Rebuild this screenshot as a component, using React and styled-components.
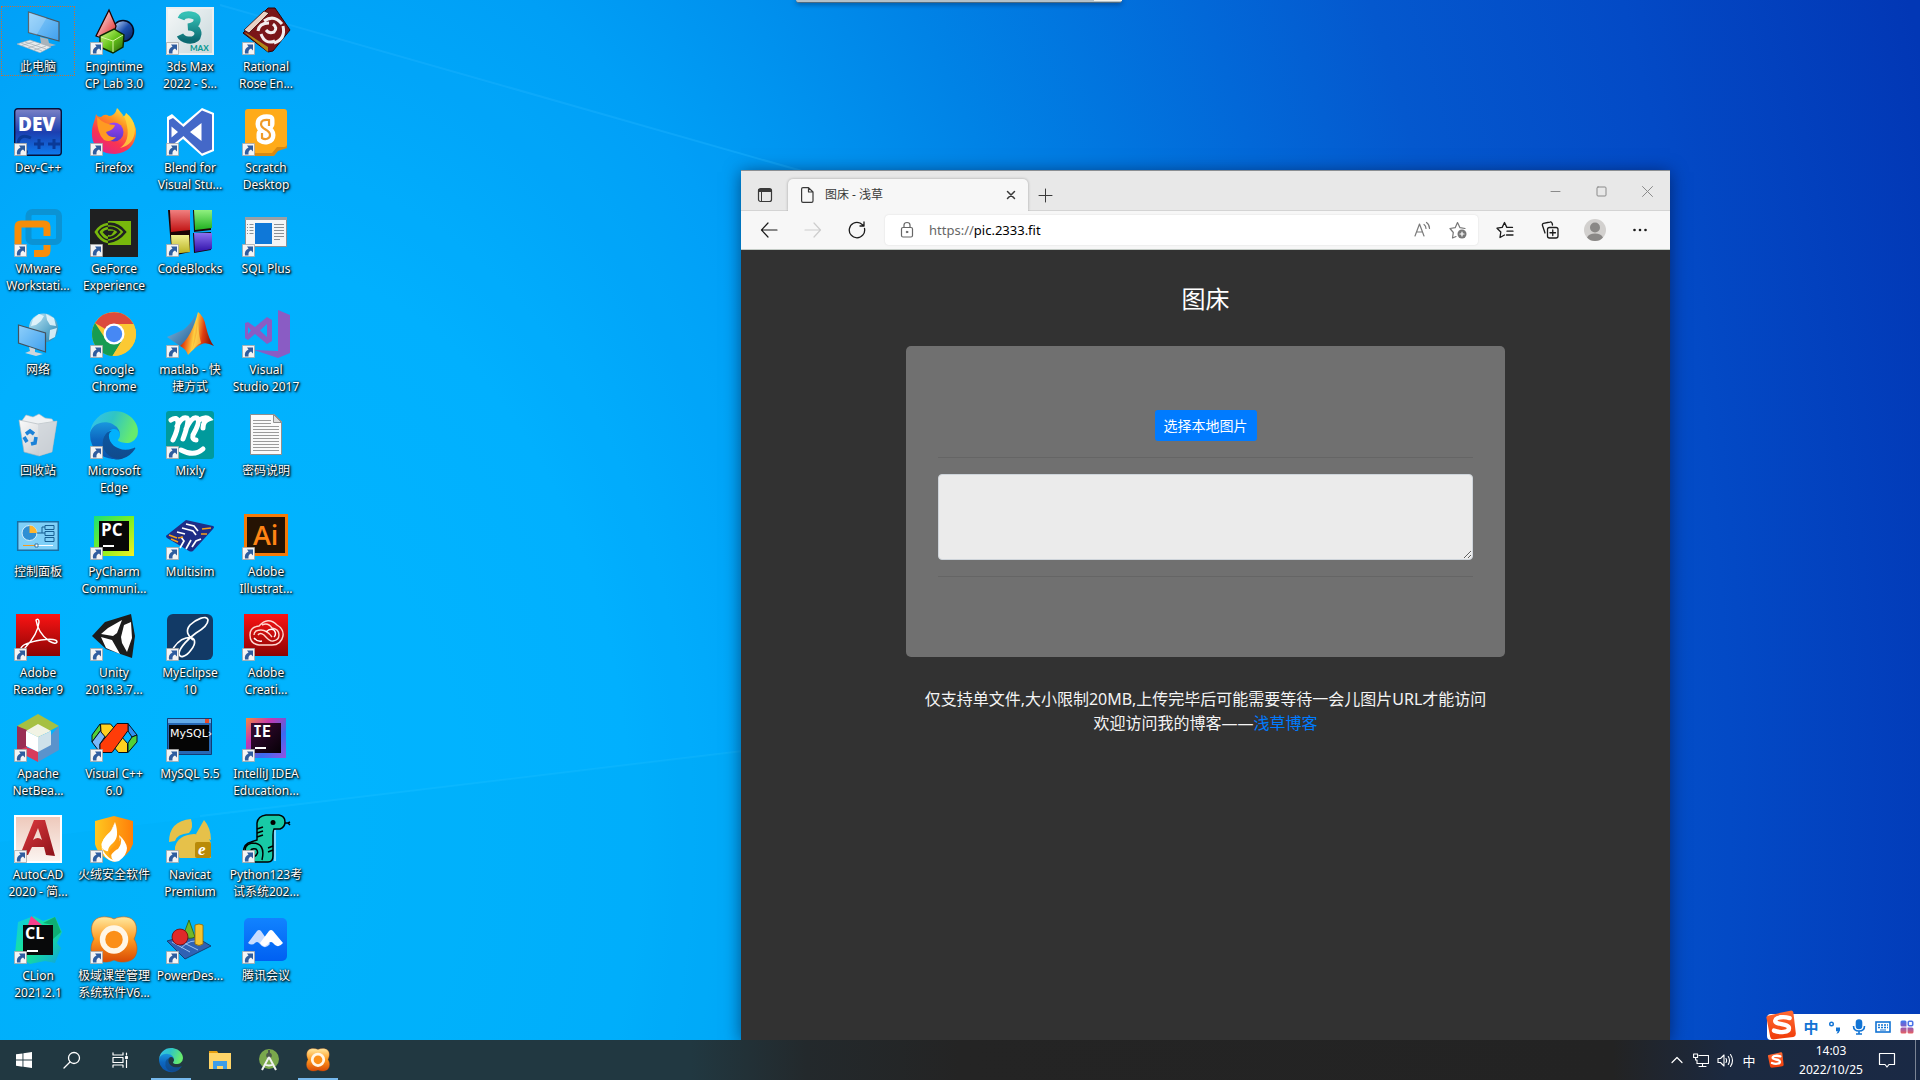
import React from "react";
import styled, { createGlobalStyle, css } from "styled-components";

const uiFont = `"Noto Sans", "Noto Sans CJK SC", sans-serif`;

const GlobalStyle = createGlobalStyle`
  *, *::before, *::after { box-sizing: border-box; }
  body { margin: 0; font-family: ${uiFont}; font-size: 12px; overflow: hidden; }
  button { font-family: inherit; border: 0; padding: 0; background: none; color: inherit; }
`;

/* ---------- shared paint servers ---------- */

const Grad = ({ id, stops, x1 = 0, y1 = 0, x2 = 0, y2 = 1 }) => (
  <linearGradient id={id} x1={x1} y1={y1} x2={x2} y2={y2}>
    {stops.map((c, i) => (
      <stop key={i} offset={i / (stops.length - 1)} stopColor={c} />
    ))}
  </linearGradient>
);

const HiddenSvg = styled.svg`
  position: absolute;
  width: 0;
  height: 0;
`;

const PaintDefs = () => (
  <HiddenSvg aria-hidden="true">
    <defs>
      <Grad id="screen" stops={["#8fd0fb", "#3fa0ee"]} x2={1} />
      <Grad id="engRed" stops={["#fff", "#e02020"]} x2={1} />
      <Grad id="engBlue" stops={["#d5e8ff", "#1c4fae", "#061c52"]} x2={1} />
      <Grad id="engGreen" stops={["#dcff90", "#67c51c", "#245c08"]} x2={1} />
      <Grad id="max3" stops={["#35c0b5", "#0b6a72"]} />
      <Grad id="maxBg" stops={["#f4f7f7", "#c8d8dc"]} x2={1} />
      <Grad id="dev" stops={["#7d83c6", "#1c3fb0", "#0d7cf0"]} />
      <Grad id="fox" stops={["#fff04a", "#ff9020", "#fa3550", "#e0208c"]} x1={0.8} x2={0.2} />
      <Grad id="foxIn" stops={["#9a45f5", "#5a36c8"]} />
      <Grad id="cbR" stops={["#f08080", "#c01010"]} />
      <Grad id="cbG" stops={["#90f080", "#20b020"]} />
      <Grad id="cbY" stops={["#f2f090", "#b8b020"]} />
      <Grad id="cbB" stops={["#8a70f0", "#3010a8"]} />
      <Grad id="globe" stops={["#c4ecfa", "#1d7fae"]} x2={1} />
      <Grad id="mat" stops={["#7a1505", "#e84a10", "#ffd040", "#e03c10", "#901808"]} x2={1} y2={0.2} />
      <Grad id="matBlue" stops={["#8fc4e8", "#1e5c94"]} x2={1} />
      <Grad id="bin" stops={["#fbfbfb", "#b8bec4"]} x2={1} />
      <Grad id="edgeA" stops={["#0c59a4", "#114a8b"]} />
      <Grad id="edgeB" stops={["#1b9de2", "#0d67c0", "#0a54ac"]} />
      <Grad id="edgeC" stops={["#35c1f1", "#2fc5c5", "#66eb6e"]} x2={1} y2={0.3} />
      <Grad id="py" stops={["#18e07a", "#7cf020", "#f8f020"]} x2={1} />
      <Grad id="red" stops={["#fb1414", "#8c0404"]} />
      <Grad id="ie" stops={["#f88a3a", "#c438b0", "#3a6cf0", "#9a50e0"]} x2={1} />
      <Grad id="ieIn" stops={["#3a0a38", "#060006"]} x2={1} />
      <Grad id="acad" stops={["#e03a40", "#8c1218"]} x2={1} />
      <Grad id="acadBg" stops={["#fbf4f0", "#eec9bb"]} y1={1} y2={0} />
      <Grad id="fire" stops={["#ffc820", "#ff7e08"]} x2={1} y2={0} />
      <Grad id="flower" stops={["#ffe9a0", "#ff9a20", "#d84a04"]} />
      <Grad id="meet" stops={["#1183ff", "#0060f2"]} />
      <Grad id="clion" stops={["#10c8e8", "#18e890", "#10a0e0"]} x2={1} />
      <Grad id="sogou" stops={["#ff6a34", "#f03c08"]} />
      <Grad id="sogouGrid" stops={["#3f78f0", "#8a5ac0", "#e86060"]} />
    </defs>
  </HiddenSvg>
);

/* ---------- application artwork, drawn on a 48-unit square ---------- */

const EdgeArt = () => (
  <g transform="scale(.1875)">
    <path fill="url(#edgeA)" d="M235.7 195.5a93.7 93.7 0 0 1-10.6 4.7 101.9 101.9 0 0 1-35.9 6.4c-47.3 0-88.5-32.5-88.5-74.3a31.5 31.5 0 0 1 16.4-27.3c-42.8 1.8-53.8 46.4-53.8 72.5 0 74 68.1 81.4 82.8 81.4 7.9 0 19.8-2.3 27-4.6l1.3-.4a128.3 128.3 0 0 0 66.6-52.8 4 4 0 0 0-5.3-5.6Z" />
    <path fill="url(#edgeB)" d="M105.7 241.4a79.2 79.2 0 0 1-22.7-21.3 80.7 80.7 0 0 1 29.5-120c3.1-1.5 8.5-4.1 15.6-4a32.4 32.4 0 0 1 25.7 13 31.9 31.9 0 0 1 6.3 18.7c0-.2 24.5-79.6-80-79.6-43.9 0-80 41.6-80 78.2a130.2 130.2 0 0 0 12.1 56 128 128 0 0 0 156.4 67 75.5 75.5 0 0 1-62.8-8Z" />
    <path fill="url(#edgeC)" d="M152.3 148.9c-.9 1-3.4 2.5-3.4 5.7 0 2.6 1.7 5.2 4.8 7.3 14.3 10 41.4 8.6 41.5 8.6 10.7 0 21.1-2.9 30.3-8.3a61.4 61.4 0 0 0 30.4-52.9c.3-22.4-8-37.3-11.3-43.9C223.5 23.9 177.7 0 128 0A128 128 0 0 0 0 126.2c.5-36.5 36.8-66 80-66 3.5 0 23.5.3 42 10a72.6 72.6 0 0 1 30.9 29.3c6.1 10.6 7.2 24.1 7.2 29.5s-2.7 13.3-7.8 19.9Z" />
  </g>
);

const FlowerArt = () => (
  <>
    <path fill="url(#flower)" stroke="#c85a10" strokeWidth=".6" d="M24 3C30 0 39 0 43 4c5 5 4 13 1 19 4 6 4 14 0 19-5 5-14 5-20 2-6 3-15 3-20-2-4-5-4-13 0-19C1 17 0 9 5 4c4-4 13-4 19-1Z" />
    <circle cx="24" cy="23.5" r="11.500" fill="#fb8f18" stroke="#fff6e6" strokeWidth="5.500" />
  </>
);

const SogouArt = () => (
  <>
    <path fill="url(#sogou)" d="M2 9 38 1q4-1 5 3l4 34q0 4-4 5L11 47q-4 0-5-4L0 13q-1-3 2-4Z" />
    <path fill="none" stroke="#fff" strokeWidth="7" strokeLinecap="round" d="M37 13c-9-3-22-2-23 4-1 7 22 4 22 12 0 7-14 8-24 4" />
  </>
);

const art = {
  pc: (
    <>
      <path fill="url(#screen)" stroke="#4b5660" strokeWidth="1.200" d="M14.500 5 45 15v19L14.500 25.500Z" />
      <path fill="#fff" opacity=".2" d="m14.500 5 18 6-10 17-8-2.500Z" />
      <path fill="#a9b4bc" d="m26 30 8 2 1 4 7 2-8 2-13-3 6-1Z" />
      <path fill="#e6eaed" stroke="#a4adb4" strokeWidth=".6" d="m3 37 13-4 21 7-11 5.700Z" />
      <path stroke="#9aa4ab" strokeWidth=".6" d="m7 36 21 8M11 35l21 7M8 38.500l12-4M14 41l12-4M20 43l12-4" />
    </>
  ),
  engin: (
    <>
      <circle cx="33" cy="24" r="10.500" fill="url(#engBlue)" stroke="#020a20" strokeWidth="1.500" />
      <path fill="url(#engRed)" stroke="#200" strokeWidth="1.300" d="M19 3 6 29q8 4 17 0l3-10Z" />
      <path fill="url(#engGreen)" stroke="#0c2a02" strokeWidth="1.400" d="m10 29 14-7 10 6-1 12-10 6-13-6Z" />
      <path fill="none" stroke="#d8f6a0" d="m11 30 12 4 10-6M23 34v11" />
    </>
  ),
  max: (
    <>
      <path fill="#e9eff0" d="M0 0h48v48H0z" />
      <path fill="url(#maxBg)" d="M2 2h44v44H2z" />
      <path fill="none" stroke="url(#max3)" strokeWidth="7" d="M15 12q2-5 10-4 7 1 6 6-1 5-9 6 10 0 10 7-1 7-10 6-6-1-8-5" />
      <text x="24" y="43.500" fontFamily="Lato" fontWeight="900" fontSize="8" fill="#0f9a95">MAX</text>
    </>
  ),
  rose: (
    <>
      <path fill="#7a1518" stroke="#2a0505" d="M22 5 26 1h7l15 22-17 21-5 1L1 26Z" />
      <path fill="#ead2c4" stroke="#3a0808" strokeWidth=".8" d="M22 4 2 23l5 3L27 6Z" />
      <path fill="#b08818" d="m2 25 4 2 20 13v5Z" />
      <path fill="none" stroke="#f4eded" strokeWidth="3" d="M22 14q10-7 18 3M16 24q1-8 11-8M41 19q3 13-9 17M19 27q4 11 14 7M31 17q5 4 1 8-5 2-8-2" />
    </>
  ),
  dev: (
    <>
      <rect x=".7" y=".7" width="46.600" height="46.600" rx="3" fill="url(#dev)" stroke="#06123a" strokeWidth="1.400" />
      <path stroke="#0a3a98" strokeWidth="3" fill="none" d="M17 30q-11-5-13 5 0 9 10 9M20 36h10M25 31v10M34 36h12M40 31v10" />
      <text x="4" y="22.500" fontFamily="Open Sans" fontWeight="800" fontSize="19" fill="#fff">DEV</text>
    </>
  ),
  firefox: (
    <>
      <path fill="url(#fox)" d="M6 6q1 3 5 3 4-4 8-1 6 0 8-8 5 5 6 9 3-2 3-4 11 10 10 21-2 18-21 20C8 46 1 35 2 24 2 17 5 13 6 6Z" />
      <circle cx="24" cy="24" r="9.500" fill="url(#foxIn)" />
      <path fill="#ff9a22" d="M7 9q8 8 18 8-1 5-9 7 2 6 10 5-5 6-12 3-7-6-7-23Z" />
      <path fill="#ffd83c" opacity=".8" d="M27 0q9 8 10 18 3 15-7 22 14-3 15-18Q44 10 36 5q0 3-3 4-2-6-6-9Z" />
    </>
  ),
  blend: (
    <>
      <path fill="#fff" d="M36 0 48 5v38l-12 5-19-17-11 9-5-2V9l5-3 11 10Z" />
      <path fill="#4468c8" d="M36 2.500 46 6.500v35l-10 4L17.500 28 7 36.500 3 35V12l4-2 10.500 9Z" />
      <path fill="#fff" d="m5.500 18.500 6.500 5.500-6.500 5.500ZM35.500 15v18L24 24Z" />
    </>
  ),
  scratch: (
    <>
      <path fill="#d98a12" d="M3 6h42v34l-9 3-4 5H3Z" />
      <path fill="#ffab19" d="M6 1h36q3 0 3 3v32q0 3-3 3h-7l-5 6H6q-3 0-3-3V4q0-3 3-3Z" />
      <path fill="none" stroke="#fff" strokeWidth="11" strokeLinecap="round" strokeLinejoin="round" d="M27 16v-4q-8-1-8 4c0 6 9 5 9 11 0 4-5 5-8 3v-4" />
      <path fill="none" stroke="#f09a28" strokeWidth="2.200" d="M27 18v-6q-8-1-8 4c0 6 9 5 9 11 0 4-5 5-8 3v-5" />
    </>
  ),
  vmware: (
    <>
      <rect x="14.500" y="3" width="30.500" height="30" rx="4" fill="none" stroke="#0b93d4" strokeWidth="6" />
      <path fill="none" stroke="#f78d08" strokeWidth="7" d="M33 27V18q0-3-3-3H7q-3 0-3 3v18M20 44.500h10q3 0 3-3V36" />
    </>
  ),
  geforce: (
    <>
      <path fill="#1f2021" d="M0 0h48v48H0z" />
      <path fill="#78b80c" d="M18 12h23v24H18z" />
      <path fill="none" stroke="#78b80c" strokeWidth="2.600" d="M18 15Q10 16 6 23q5 9 12 10M18 19q-5 1-7 4 3 5 7 6" />
      <path fill="none" stroke="#1f2021" strokeWidth="2.600" d="M18 15q10-1 17 8-7 9-17 10M18 19q7-1 11 4-5 6-11 6M18 23h4q-2 4-5 0" />
    </>
  ),
  codeblocks: (
    <>
      <path fill="#1b0505" d="m2 1 22 1v21l-20 3ZM27 1l18 1v19l-17 2ZM4 26l20-3v20L6 47ZM27 24l18-1v18l-17 3Z" />
      <path fill="url(#cbR)" d="M4 1h20v20L5 23Z" />
      <path fill="url(#cbG)" d="M28 1h18v18l-17 2Z" />
      <path fill="url(#cbY)" d="M5 26h18l1 17L6 45Z" />
      <path fill="url(#cbB)" d="M28 24h18v16l-17 3Z" />
    </>
  ),
  sql: (
    <>
      <path fill="#f4f5f6" stroke="#8b9196" d="M3.500 8.500h41v29h-41z" />
      <path fill="#9aa0a5" d="M3 8h42v3H3z" />
      <path fill="#0f78d8" d="M13 14h17v21H13z" />
      <path stroke="#8a9096" d="M5 15.500h1M7.500 15.500h4M5 18.500h1M7.500 18.500h4M5 21.500h1M7.500 21.500h4M5 24.500h1M7.500 24.500h4M32 15.500h10M32 18.500h10M32 21.500h10M32 24.500h10M32 27.500h10M32 30.500h6" />
    </>
  ),
  network: (
    <>
      <circle cx="29.500" cy="18" r="14.500" fill="url(#globe)" />
      <path fill="#eaf8fd" opacity=".85" d="m19 9 6-5 5 2-3 5-5 4-5 1ZM32 4l8 4 2 8-6-1-3-5ZM36 20l7-2-2 9-6 3Z" />
      <path fill="url(#screen)" stroke="#44525e" strokeWidth="1.200" d="m4.500 15 27 8v19L4.500 33Z" />
      <path fill="#cfd6db" d="m15 37 6 2v3l8 2-7 2-11-3 5-2Z" />
    </>
  ),
  chrome: (
    <>
      <circle cx="24" cy="24" r="22" fill="#fbc933" />
      <path fill="#dc4a3c" d="M24 24 5 13A22 22 0 0 1 43.500 14H24Z" />
      <path fill="#179c52" d="M5 13A22 22 0 0 0 22.500 46L33 29l-9-5-8.500 5Z" />
      <path fill="#fbc933" d="M43.500 14A22 22 0 0 1 22.500 46L33 29q3-7-3-15Z" />
      <circle cx="24" cy="24" r="10.500" fill="#fff" />
      <circle cx="24" cy="24" r="8.200" fill="#4688f4" />
    </>
  ),
  matlab: (
    <>
      <path fill="url(#matBlue)" d="m1 27 16-7q8-6 13-16l-5 26-11 6Z" />
      <path fill="url(#mat)" d="M32 2q6 4 8 15 3 13 8 19-8-4-12-2-6 2-14 11-2-6-8-9Q26 26 32 2Z" />
      <path fill="#ffdc50" opacity=".7" d="M32 4q0 19 3 29-5 2-9 8 6-17 6-37Z" />
    </>
  ),
  vs: (
    <>
      <path fill="#8a5cc4" d="m36 0 12 5v38l-12 5-24-8 24 1Z" />
      <path fill="#8a5cc4" fillRule="evenodd" d="m25 7 5 3v21l-5 3-12-10-7 6-3-2V13l3-1 7 5ZM6 17v7l3-3.500Zm19-3-7 6.500 7 6.500Z" />
    </>
  ),
  bin: (
    <>
      <path fill="#eef1f3" stroke="#b4bbc1" strokeWidth=".6" d="m7 11 5-7 7 2 6-3 6 4 7 1 3 5-17 4Z" />
      <path fill="url(#bin)" stroke="#a9b1b7" strokeWidth=".6" d="m5 9 19 4 19-3-5 31-13 4-15-4Z" />
      <path fill="#cdd3d8" d="m24 13 19-3-5 31-13 4Z" opacity=".7" />
      <path fill="none" stroke="#1b82d8" strokeWidth="3.600" d="m12 23 4-3 4 3M22 26l-1 6-4 1M13 31l-3-5" />
    </>
  ),
  edge: <EdgeArt />,
  mixly: (
    <>
      <rect width="48" height="48" rx="3" fill="#009a9c" />
      <path fill="none" stroke="#fff" strokeWidth="5" strokeLinecap="round" d="M5 9q6-4 7 2 0 8-5 18M11 15q5-10 10-8 3 2-4 21M20 18q6-13 11-11 4 3-4 17-1 5 3 5M33 9q7-4 10-1-6 2-6 9M15 39q13 7 22-1" />
    </>
  ),
  doc: (
    <>
      <path fill="#fafafa" stroke="#8f8f8f" d="M8.500 3.500h24l7 7v33h-31z" />
      <path fill="#ddd" stroke="#8f8f8f" d="M31.500 3.500v8h8z" />
      <path stroke="#9b9b9b" d="M11 9.500h18M11 12.500h18M11 15.500h26M11 18.500h26M11 21.500h26M11 24.500h26M11 27.500h26M11 30.500h26M11 33.500h26M11 36.500h26M11 39.500h26" />
    </>
  ),
  panel: (
    <>
      <path fill="#7fd0f8" stroke="#196fa4" strokeWidth="1.500" d="M3.700 9.700h40.600v28.600H3.700z" />
      <circle cx="15.500" cy="21" r="7.500" fill="#2f8fd4" stroke="#d8f0fc" />
      <path fill="#ffb52e" d="M15.500 21v-7.500a7.500 7.500 0 0 1 7.500 7.500Z" />
      <path fill="none" stroke="#175f92" d="M23 21h5v-6h3M28 21h3M31 13.500h9v4h-9zM31 19.500h9v4h-9zM31 25.500h9v4h-9z" />
      <path stroke="#f49a20" d="M9 33.500h13" />
      <path stroke="#fff" d="M24 33.500h15" />
      <path fill="#fff" stroke="#175f92" strokeWidth=".8" d="M21 32h3v3h-3z" />
    </>
  ),
  pycharm: (
    <>
      <path fill="url(#py)" d="M4 4h40v40H4z" />
      <path fill="#070707" d="M9 9h30v30H9z" />
      <text x="11" y="24" fontFamily="Open Sans" fontWeight="700" fontSize="17" fill="#fff">PC</text>
      <path fill="#fff" d="M13 33h11v2H13z" />
    </>
  ),
  multisim: (
    <>
      <path fill="#1e2d86" d="m20 8 27 6q2 1 0 3L27 39q-2 1-4 0L1 26q-2-2 0-3Z" />
      <path fill="none" stroke="#fff" strokeWidth="1.700" d="m20 12 8 2 4 5M16 16l11 3 3 4M11 20l8 2M14 36l4-7-3-4M20 37l5-9M26 35l4-6 5-2" />
      <path fill="none" stroke="#f3a01c" strokeWidth="1.700" d="m3 23 8 3M5 27l7 3M36 17l9-1M35 22l6 0M17 25l-5 1" />
    </>
  ),
  ai: (
    <>
      <path fill="#f47a08" d="M2 2h44v42H2z" />
      <path fill="#251303" d="M5 5h38v36H5z" />
      <text x="11" y="33" fontFamily="Open Sans" fontWeight="600" fontSize="27" fill="#ff8414">Ai</text>
    </>
  ),
  reader: (
    <>
      <path fill="url(#red)" d="M2 1h44v42H2z" />
      <path fill="none" stroke="#fff" strokeWidth="1.500" d="M22 7q3-2 3 2-1 12-14 26-3 3-4 0 2-5 20-8 16-2 16 2-1 3-8-1Q24 20 22 7Z" />
    </>
  ),
  unity: (
    <>
      <path fill="#1c1c1c" d="m2 23 13-14 26-8 4 22-3 22-26-9Z" />
      <path fill="#fff" d="m11 21 7-6 14-8-5 13-4 3ZM11 24l11 3 8 14-14-6ZM34 12l7-3 1 16-5 14-5-9-1-6Z" />
    </>
  ),
  myeclipse: (
    <>
      <rect x="1" y="1" width="46" height="46" rx="6" fill="#123a66" />
      <path fill="none" stroke="#fff" strokeWidth="1.700" d="M4 41q7-14 16-16c11-2 10 6 5 12-5 7-12 9-12 3 1-6 10-15 17-20 7-4 12-8 12-13-1-6-13 0-18 5-5 6-2 11 3 15" />
    </>
  ),
  cloud: (
    <>
      <path fill="url(#red)" d="M2 1h44v42H2z" />
      <path fill="none" stroke="#ffd8d0" strokeWidth="1.400" d="M8 22q0-8 9-9 9-10 18-1 7 4 6 11-2 9-11 9H17q-9-1-9-10ZM12 22q0-5 7-5 6 0 11 7M16 22q2-3 6 0 6 7 9 6 6-1 6-6 0-6-7-7-4-6-10-3" />
      <path fill="none" stroke="#fff" strokeWidth="1.400" d="M20 28q-5 1-8-3M24 19q4-4 8-2 3 4 0 7" />
    </>
  ),
  netbeans: (
    <>
      <path fill="#a6c042" d="m24 0 21 12-21 11L3 12Z" />
      <path fill="#9a2e54" d="M3 12v25l10-2V16Z" />
      <path fill="#d93c5c" d="m3 37 21 11 2-10-14-5Z" />
      <path fill="#5a93cc" d="M45 12v24L24 48V36Z" />
      <path fill="#f1f3e4" d="m24 10 13 7-13 6-12-6Z" />
      <path fill="#fff" d="m12 17 12 6v15l-12-6Z" />
      <path fill="#cfe2ea" d="m37 17-13 6v15l13-7Z" />
    </>
  ),
  vc: (
    <g stroke="#06101c" strokeLinejoin="round">
      <path fill="#52d038" d="m2 21 8-11 1 6-9 12Z" />
      <path fill="#7ab8f8" d="m11 16 5 5-6 9v8.500L2 28Z" />
      <path fill="#ffd020" d="M10.500 10h10l17 19.500v9h-9L11 18Z" />
      <path fill="#3090f0" d="M38 9.500 47 21l-5 2-4-6Z" />
      <path fill="#52d038" d="M47 21v7l-9 10.500V29l4-6Z" />
      <path fill="#ff3c08" d="M27 9.500h11v7L22 38.500H10V30Z" />
    </g>
  ),
  mysql: (
    <>
      <path fill="#2668b4" stroke="#123c74" d="M1.500 4.500h44v36h-44z" />
      <path fill="#62aae8" d="M2 5h43v4H2z" />
      <path fill="#e84a2a" d="M39 5h4v4h-4z" />
      <path fill="#050505" d="M3 11h40v26H3z" />
      <text x="4" y="23" fontFamily="DejaVu Sans" fontSize="11" fill="#fff">MySQL›</text>
    </>
  ),
  idea: (
    <>
      <path fill="url(#ie)" d="M4 4h40v40H4z" />
      <path fill="url(#ieIn)" d="M9 9h30v30H9z" />
      <text x="11" y="23" fontFamily="DejaVu Sans Mono" fontWeight="700" fontSize="15" fill="#fff">IE</text>
      <path fill="#fff" d="M13 33h11v2H13z" />
    </>
  ),
  autocad: (
    <>
      <path fill="#fff" d="M0 0h48v48H0z" />
      <path fill="url(#acadBg)" d="M2 2h44v44H2z" />
      <path fill="url(#acad)" fillRule="evenodd" d="M20 5h11l10 36-9-1-2-8H18l-4 8H6Zm4 8-5 12q5-4 9 0Z" />
    </>
  ),
  huorong: (
    <>
      <path fill="url(#fire)" d="M24 1 43 6v23q-4 12-19 18Q8 41 5 29V6Z" />
      <path fill="#fff" d="M25 7q-1 6-8 13Q8 29 14 37q3 5 9 8-4-5 1-10 8-7 5-15 7 6 8 13 0 7-8 13-5 2-10-1-9-6-7-17Q20 19 25 7Z" />
      <path fill="#fff" d="M25 7q-2 8-9 14-6 7-4 12 3 4 6 3 0-4 5-8 7-6 2-21Z" />
      <path fill="#ff9a10" d="M31 22q-1 5-8 10-6 4-3 9 5-6 8-7 4-5 3-12Z" />
    </>
  ),
  navicat: (
    <>
      <path fill="#e6c14a" d="M3 27Q3 6 25 4q3 9-2 14Q11 19 9 26ZM38 5q7 8 7 20l-15-6ZM9 32q3-12 19-13 16 1 17 10v14H14q-6-3-5-11Z" />
      <rect x="29" y="27" width="16" height="16" rx="2" fill="#b98a08" />
      <text x="32" y="40" fontFamily="Liberation Serif" fontStyle="italic" fontWeight="700" fontSize="17" fill="#fff">e</text>
    </>
  ),
  python: (
    <>
      <path fill="#18caa6" stroke="#000" strokeWidth="1.500" d="M15 25V8q1-7 9-8h13q6 1 6 7 0 5-5 7h-6q-1 2-1 6v21q0 6-5 6H6q-6-1-5-9 1-10 8-11Z" />
      <path fill="none" stroke="#000" strokeWidth="1.500" d="M20 45q4-17-10-17Q1 30 4 38q3 6 8 4 6-4 2-8-6-1-5 3M15 14l6-2M15 18l6-2M15 22l6-2M26 33l5-2M26 37l5-2M43 8h3m0 0 2-1m-2 1 2 2" />
      <path stroke="#fff" d="M33 15v31" />
      <circle cx="31" cy="7.500" r="2.500" />
    </>
  ),
  clion: (
    <>
      <path fill="url(#clion)" d="m4 6 16-6 9 5 12-4 7 15-5 11 4 5-6 15-10-2-15 3L1 38Z" />
      <path fill="#f8408c" d="m17 0 11 9H14Z" />
      <path fill="#0fae74" d="m29 7 12-6 6 15-8 7V9Z" />
      <path fill="#08090a" d="M9 9h30v30H9z" />
      <text x="11" y="23" fontFamily="Open Sans" fontWeight="700" fontSize="16" fill="#fff">CL</text>
      <path fill="#fff" d="M13 34h11v2H13z" />
    </>
  ),
  flower: <FlowerArt />,
  power: (
    <>
      <path fill="#2f62b4" stroke="#10305c" strokeWidth=".8" d="m1 25 24-7 20 12-26 13Z" />
      <path fill="none" stroke="#9cc0f0" d="m6 26 18 10M12 24l20 10M15 32q10-10 20-6" />
      <path fill="#72b828" stroke="#2c5c08" strokeWidth=".8" d="M23 4 17 20q6 4 12 1Z" />
      <circle cx="14" cy="21" r="8" fill="#e02a2a" stroke="#6c0808" strokeWidth=".8" />
      <path fill="#f4c430" stroke="#8a6408" strokeWidth=".8" d="M29 9q4-2 8 0v19q-4 3-8 0Z" />
    </>
  ),
  meeting: (
    <>
      <rect x="2" y="2" width="43" height="43" rx="5" fill="url(#meet)" />
      <path fill="#c8dcff" d="m6 27 9-12q2-2 4 0l9 13q-4 5-8 2l-3-3q-2-2-4 0-3 3-7 0Z" />
      <path fill="#fff" d="m18 27 9-12q2-2 4 0l10 12q-4 5-8 2l-2-2q-2-2-4 0l-2 2q-4 3-7-2Z" />
    </>
  ),
};

/* ---------- desktop ---------- */

const Screen = styled.div`
  display: flex;
  flex-direction: column;
  height: 100vh;
`;

const Desktop = styled.main`
  position: relative;
  flex: 1;
  min-height: 0;
  overflow: hidden;
  background: radial-gradient(
    1000px 1500px at 13% 80%,
    #00b9ff 0,
    #00b2fe 38%,
    #009ff6 62%,
    #0091ee 74%,
    #0083e6 86%,
    #0268d8 110%,
    #0458ce 125%,
    #034ac6 148%,
    #0237b5 175%
  );
`;

const Rays = styled.svg`
  position: absolute;
  inset: 0;
  width: 100%;
  height: 100%;
`;

const IconGrid = styled.div`
  position: relative;
  display: grid;
  grid-auto-flow: column;
  grid-template-rows: repeat(10, 101px);
  grid-auto-columns: 76px;
  width: max-content;
`;

const Shortcut = styled.button`
  position: relative;
  display: flex;
  flex-direction: column;
  align-items: center;
  justify-content: flex-start;
  gap: 3px;
  padding-top: 7px;
  color: #fff;
  ${(p) =>
    p.$focused &&
    css`
      &::after {
        content: "";
        position: absolute;
        inset: 6px 1px 25px 1px;
        border: 1px dotted #c4703a;
      }
    `}
`;

const AppIcon = styled.svg`
  width: ${(p) => p.$size}px;
  height: ${(p) => p.$size}px;
  overflow: visible;
`;

const Label = styled.span`
  font-size: 12px;
  line-height: 17px;
  white-space: pre;
  text-align: center;
  text-shadow: 0 0 2px #000, 1px 1px 2px #000, 1px 1px 3px rgba(0, 0, 0, 0.7);
`;

const ArrowBadge = () => (
  <>
    <path fill="#f4f4f4" stroke="#a8a8a8" strokeWidth=".8" d="M.5 35.500h12v12H.5z" />
    <path fill="#2f5d9f" d="M5 37.500h6v6l-2-2q-3 1-2.500 5H3q-1-5 3.500-7Z" />
  </>
);

const shortcuts = [
  ["pc", "此电脑", false],
  ["dev", "Dev-C++"],
  ["vmware", "VMware\nWorkstati..."],
  ["network", "网络", false],
  ["bin", "回收站", false],
  ["panel", "控制面板", false],
  ["reader", "Adobe\nReader 9"],
  ["netbeans", "Apache\nNetBea..."],
  ["autocad", "AutoCAD\n2020 - 简..."],
  ["clion", "CLion\n2021.2.1"],
  ["engin", "Engintime\nCP Lab 3.0"],
  ["firefox", "Firefox"],
  ["geforce", "GeForce\nExperience"],
  ["chrome", "Google\nChrome"],
  ["edge", "Microsoft\nEdge"],
  ["pycharm", "PyCharm\nCommuni..."],
  ["unity", "Unity\n2018.3.7..."],
  ["vc", "Visual C++\n6.0"],
  ["huorong", "火绒安全软件"],
  ["flower", "极域课堂管理\n系统软件V6..."],
  ["max", "3ds Max\n2022 - S..."],
  ["blend", "Blend for\nVisual Stu..."],
  ["codeblocks", "CodeBlocks"],
  ["matlab", "matlab - 快\n捷方式"],
  ["mixly", "Mixly"],
  ["multisim", "Multisim"],
  ["myeclipse", "MyEclipse\n10"],
  ["mysql", "MySQL 5.5"],
  ["navicat", "Navicat\nPremium"],
  ["power", "PowerDes..."],
  ["rose", "Rational\nRose En..."],
  ["scratch", "Scratch\nDesktop"],
  ["sql", "SQL Plus"],
  ["vs", "Visual\nStudio 2017"],
  ["doc", "密码说明", false],
  ["ai", "Adobe\nIllustrat..."],
  ["cloud", "Adobe\nCreati..."],
  ["idea", "IntelliJ IDEA\nEducation..."],
  ["python", "Python123考\n试系统202..."],
  ["meeting", "腾讯会议"],
];

const DockedPanel = styled.div`
  position: absolute;
  top: 0;
  left: 796px;
  width: 326px;
  height: 3px;
  display: flex;
  justify-content: flex-end;
  background: #b3c0c8;
  border-bottom: 1px solid #4d6a80;
  border-radius: 0 0 3px 3px;
  box-shadow: 0 1px 5px rgba(0, 20, 60, 0.6);
`;

const DockedTab = styled.div`
  width: 28px;
  height: 1px;
  background: #f4f2ea;
`;

/* ---------- browser window ---------- */

const Browser = styled.section`
  position: absolute;
  top: 170px;
  left: 741px;
  right: 250px;
  bottom: 0;
  display: flex;
  flex-direction: column;
  border-top: 1px solid #8b8f93;
  box-shadow: 0 2px 16px rgba(0, 10, 40, 0.55);
`;

const TabStrip = styled.div`
  display: flex;
  align-items: flex-end;
  height: 40px;
  background: #e8e8e8;
  box-shadow: inset 0 -1px #d4d4d4;
`;

const StripButton = styled.button`
  display: grid;
  place-items: center;
  width: ${(p) => p.$w}px;
  height: ${(p) => p.$h}px;
  color: ${(p) => p.$color || "#3a3a3a"};
`;

const Tab = styled.div`
  display: flex;
  align-items: center;
  width: 240px;
  height: 32px;
  padding: 0 9px 0 11px;
  background: #f7f7f7;
  border-radius: 5px 5px 0 0;
  box-shadow: 0 0 3px rgba(0, 0, 0, 0.3);
  clip-path: inset(-4px -4px 0 -4px);
  color: #3a3a3a;
`;

const TabTitle = styled.span`
  flex: 1;
  margin-left: 10px;
  font-size: 12px;
  line-height: 16px;
`;

const WindowControls = styled.div`
  display: flex;
  margin-left: auto;
`;

const Toolbar = styled.div`
  display: flex;
  align-items: center;
  height: 39px;
  padding: 0 8px 0 6px;
  background: #f7f7f7;
  border-bottom: 1px solid #c3cbc5;
`;

const ToolButton = styled(StripButton).attrs({ $h: 30 })`
  color: ${(p) => p.$color || "#1b1b1b"};
`;

const AddressBar = styled.label`
  flex: 1;
  display: flex;
  align-items: center;
  height: 30px;
  margin: 0 4px 0 6px;
  padding: 0 2px 0 12px;
  background: #fff;
  border-radius: 4px;
  box-shadow: 0 0 2px rgba(0, 0, 0, 0.12);
  color: #666;
`;

const Address = styled.div`
  position: relative;
  flex: 1;
  margin-left: 12px;
  font-size: 13px;
  line-height: 20px;
`;

const AddressInput = styled.input`
  position: absolute;
  inset: 0;
  width: 100%;
  border: 0;
  padding: 0;
  outline: 0;
  background: none;
  font: inherit;
`;

const Host = styled.span`
  color: #000;
`;

const Page = styled.div`
  flex: 1;
  min-height: 0;
  display: flex;
  flex-direction: column;
  align-items: center;
  padding-top: 34px;
  background: #323232;
  color: #f4f4f4;
  font-size: 16px;
  line-height: 24px;
  text-align: center;
`;

const PageTitle = styled.h1`
  margin: 0 0 33px;
  font-size: 24px;
  font-weight: 400;
  line-height: 29px;
  color: #fff;
`;

const UploadCard = styled.form`
  width: 100%;
  max-width: 599px;
  padding: 64px 32px;
  border-radius: 5px;
  background: #707070;
`;

const PickButton = styled.button`
  height: 31px;
  padding: 0 9px;
  border-radius: 3px;
  background: #007bff;
  color: #fff;
  font-size: 14px;
  line-height: 21px;
  vertical-align: top;
`;

const Rule = styled.hr`
  height: 1px;
  margin: 16px 0;
  border: 0;
  background: #656565;
`;

const UrlBox = styled.textarea`
  display: block;
  width: 100%;
  height: 86px;
  padding: 6px 12px;
  border: 1px solid #ced4da;
  border-radius: 4px;
  background: #ebebeb;
  font: inherit;
  resize: vertical;
`;

const Note = styled.p`
  margin: 30px 0 0;
`;

const BlogLink = styled.a`
  color: #007bff;
  text-decoration: none;
`;

const LineIcon = ({ size = 20, w = 1, children }) => (
  <svg width={size} height={size} viewBox={`0 0 ${size} ${size}`} fill="none" stroke="currentColor" strokeWidth={w} strokeLinecap="round" strokeLinejoin="round">
    {children}
  </svg>
);

const BrowserWindow = () => (
  <Browser>
    <TabStrip>
      <StripButton $w={47} $h={32} aria-label="标签页操作">
        <LineIcon size={16}>
          <rect x="1.500" y="1.500" width="13" height="13" rx="2" strokeWidth="1.200" />
          <path fill="currentColor" d="M2 2.500h12v2H2z" />
          <path d="M4.500 5v9" />
        </LineIcon>
      </StripButton>
      <Tab>
        <LineIcon size={16} w={1.2}>
          <path d="M4 .6h5.500L14 5v9q0 1.400-1.400 1.400H4q-1.400 0-1.400-1.400V2Q2.600.6 4 .6ZM9.500.8V5H14" />
        </LineIcon>
        <TabTitle>图床 - 浅草</TabTitle>
        <StripButton $w={16} $h={16} aria-label="关闭标签页">
          <LineIcon size={10} w={1.5}>
            <path d="m1.500 1.500 7 7m0-7-7 7" />
          </LineIcon>
        </StripButton>
      </Tab>
      <StripButton $w={34} $h={32} aria-label="新建标签页">
        <LineIcon size={15}>
          <path d="M7.500 1v13M1 7.500h13" />
        </LineIcon>
      </StripButton>
      <WindowControls>
        <StripButton $w={46} $h={40} $color="#8a8a8a" aria-label="最小化">
          <LineIcon size={11}><path d="M1 5.500h9" /></LineIcon>
        </StripButton>
        <StripButton $w={46} $h={40} $color="#8a8a8a" aria-label="最大化">
          <LineIcon size={11}><rect x="1" y="1" width="9" height="9" rx="1" /></LineIcon>
        </StripButton>
        <StripButton $w={46} $h={40} $color="#8a8a8a" aria-label="关闭">
          <LineIcon size={11}><path d="m.5.5 10 10m0-10-10 10" /></LineIcon>
        </StripButton>
      </WindowControls>
    </TabStrip>
    <Toolbar>
      <ToolButton $w={44} aria-label="后退">
        <LineIcon size={18} w={1.2}><path d="M17 9H1.500M8 2 1.500 9 8 16" /></LineIcon>
      </ToolButton>
      <ToolButton $w={44} $color="#cdcdcd" aria-label="前进">
        <LineIcon size={18} w={1.2}><path d="M1 9h15.500M10 2l6.500 7-6.500 7" /></LineIcon>
      </ToolButton>
      <ToolButton $w={44} aria-label="刷新">
        <LineIcon size={18} w={1.3}><path d="M16.500 7.500A7.700 7.700 0 1 1 12 2l3.500 2.500M16 1v4h-4" /></LineIcon>
      </ToolButton>
      <AddressBar>
        <LineIcon size={20}>
          <rect x="4.500" y="7.500" width="11" height="9.500" rx="1.500" strokeWidth="1.200" />
          <path d="M7 7.500V5q0-2.500 3-2.500T13 5v2.500" strokeWidth="1.200" />
          <circle cx="10" cy="12" r=".8" fill="currentColor" />
        </LineIcon>
        <Address>
          <AddressInput aria-label="地址栏" />
          https://<Host>pic.2333.fit</Host>
        </Address>
        <ToolButton as="span" $w={36} $color="#7a7a7a">
          <LineIcon size={18} w={1.2}>
            <path d="m2 15 4.500-12L11 15M3.700 11h5.600M11 3.500q2 1.500 2 4M13.500 1.500q3 2 3 6" />
          </LineIcon>
        </ToolButton>
        <ToolButton as="span" $w={36} $color="#777">
          <LineIcon size={18} w={1.2}>
            <path d="M7 15.500 3.500 17l.8-5.500L1 7.500 6.200 6.700 8.500 1.500l2.500 5.200 5 .8" />
            <circle cx="13" cy="13" r="4.500" fill="currentColor" stroke="none" />
            <path stroke="#fff" d="M11 13h4M13 11v4" />
          </LineIcon>
        </ToolButton>
      </AddressBar>
      <ToolButton $w={45} aria-label="收藏夹">
        <LineIcon size={18} w={1.3}><path d="M8.500 14 4 16.500l.8-5.500L1 7.200l5.200-.8L8.500 1.500l2.300 4.900H16.500M11 10.200h6M10.500 14H17" /></LineIcon>
      </ToolButton>
      <ToolButton $w={45} aria-label="集锦">
        <LineIcon size={18} w={1.3}>
          <rect x="6.500" y="6.500" width="10.500" height="10.500" rx="2" />
          <path d="M11.750 9v5.500M9 11.750h5.500M4 12 1.500 4.500Q1 3 2.500 2.400L9 1q1.500-.4 2.200 1.500L11.500 4" />
        </LineIcon>
      </ToolButton>
      <ToolButton $w={45} aria-label="个人资料">
        <svg width="22" height="22" viewBox="0 0 22 22">
          <circle cx="11" cy="11" r="11" fill="#d2d0ce" />
          <circle cx="11" cy="8.500" r="5" fill="#8a8886" />
          <path fill="#8a8886" d="M3 18.500q2-4 8-4t8 4q-3 3.500-8 3.500t-8-3.500Z" />
        </svg>
      </ToolButton>
      <ToolButton $w={45} aria-label="设置及其他">
        <svg width="14" height="4" fill="currentColor">
          <circle cx="1.500" cy="2" r="1.300" /><circle cx="7" cy="2" r="1.300" /><circle cx="12.500" cy="2" r="1.300" />
        </svg>
      </ToolButton>
    </Toolbar>
    <Page>
      <PageTitle>图床</PageTitle>
      <UploadCard>
        <PickButton type="button">选择本地图片</PickButton>
        <Rule />
        <UrlBox aria-label="图片地址" />
        <Rule />
      </UploadCard>
      <Note>
        仅支持单文件,大小限制20MB,上传完毕后可能需要等待一会儿图片URL才能访问
        <br />
        欢迎访问我的博客——<BlogLink href="#">浅草博客</BlogLink>
      </Note>
    </Page>
  </Browser>
);

/* ---------- input method bar ---------- */

const ImeBar = styled.div`
  position: absolute;
  right: 0;
  bottom: 0;
  display: flex;
  align-items: center;
  height: 26px;
  padding: 0 1px 0 32px;
  background: #fff;
  border-radius: 4px 0 0 4px;
  color: #1274d4;
`;

const ImeLogo = styled.svg`
  position: absolute;
  left: -1px;
  bottom: 0;
  width: 31px;
  height: 30px;
  overflow: visible;
`;

const ImeButton = styled.button`
  display: grid;
  place-items: center;
  width: 24px;
  height: 26px;
  font-size: 15px;
  line-height: 24px;
  font-weight: 700;
`;

const Ime = () => (
  <ImeBar>
    <ImeLogo viewBox="0 0 48 48"><SogouArt /></ImeLogo>
    <ImeButton>中</ImeButton>
    <ImeButton aria-label="标点">
      <svg width="14" height="14" fill="currentColor">
        <circle cx="3.500" cy="4" r="1.800" fill="none" stroke="currentColor" strokeWidth="1.400" />
        <path d="M8 7.500h4v3q-1 3-3.500 3.200l1.300-2.500H8Z" />
      </svg>
    </ImeButton>
    <ImeButton aria-label="语音">
      <svg width="14" height="16" fill="none" stroke="currentColor" strokeWidth="1.600">
        <rect x="4.500" y="1" width="5" height="8.500" rx="2.500" fill="currentColor" />
        <path d="M1.500 7q0 5 5.500 5t5.500-5M7 12v3M4 15h6" />
      </svg>
    </ImeButton>
    <ImeButton aria-label="键盘">
      <svg width="16" height="12" fill="none" stroke="currentColor">
        <rect x="1" y="1" width="14" height="10" strokeWidth="1.600" />
        <path d="M3 4h10M3 6.500h10" strokeDasharray="2 1" strokeWidth="1.400" />
        <path d="M5 9h6" />
      </svg>
    </ImeButton>
    <ImeButton aria-label="工具箱">
      <svg width="14" height="14" viewBox="0 0 14 14" fill="url(#sogouGrid)">
        <path d="M2 .5h3q1.500 0 1.500 1.500v4.500H2Q.5 6.500.5 5V2Q.5.500 2 .5ZM2 7.500h4.500V12q0 1.500-1.500 1.500H2Q.5 13.500.5 12V9q0-1.500 1.500-1.500ZM7.500 7.500H12q1.500 0 1.500 1.500v3q0 1.500-1.500 1.500H9q-1.500 0-1.500-1.500Z" />
        <rect x="8.300" y="1.300" width="4.400" height="4.400" rx="1" fill="none" stroke="#4c74e8" strokeWidth="1.600" />
      </svg>
    </ImeButton>
  </ImeBar>
);

/* ---------- taskbar ---------- */

const Taskbar = styled.footer`
  display: flex;
  justify-content: space-between;
  height: 40px;
  background: linear-gradient(90deg, #213841 0, #213841 36%, #23292c 42%, #242424 50%, #232323 84%, #1b2940 90%, #1a2945 100%);
  color: #fff;
`;

const TaskGroup = styled.div`
  display: flex;
  align-items: stretch;
`;

const TaskButton = styled.button`
  display: grid;
  place-items: center;
  width: ${(p) => p.$w || 48}px;
  height: 40px;
  font-size: ${(p) => p.$font || 12}px;
`;

const AppTask = styled(TaskButton).attrs({ $w: 49 })`
  box-shadow: ${(p) => (p.$open ? "inset 0 -2px #76b9ed" : "none")};
  clip-path: inset(0 4px 0 5px);
`;

const AppTasks = styled.div`
  display: flex;
  padding-left: 2px;
`;

const Clock = styled.time`
  display: flex;
  flex-direction: column;
  justify-content: center;
  width: 80px;
  text-align: center;
  font-size: 12px;
  line-height: 19px;
`;

const ShowDesktop = styled.button`
  width: 5px;
  border-left: 1px solid #7b8494;
`;

const TaskbarView = () => (
  <Taskbar>
    <TaskGroup>
      <TaskButton aria-label="开始">
        <svg width="16" height="16" fill="#fff">
          <path d="M0 2.300 6.500 1.400v6.200H0zM7.400 1.300 16 0v7.600H7.400zM0 8.500h6.500v6.200L0 13.800zM7.400 8.500H16V16l-8.600-1.200z" />
        </svg>
      </TaskButton>
      <TaskButton aria-label="搜索">
        <LineIcon size={18} w={1.3}>
          <circle cx="11" cy="7" r="5.500" />
          <path d="m7 11-6 6" />
        </LineIcon>
      </TaskButton>
      <TaskButton aria-label="任务视图">
        <LineIcon size={16} w={1.2}>
          <path d="M1 .8V3h10V.8M1 15.200V13h10v2.200M1 5.500h10v5H1zM14.500 1v2M14.500 8v7.500" />
          <path fill="#fff" d="M13.700 4.500h1.600v2h-1.600z" />
        </LineIcon>
      </TaskButton>
      <AppTasks>
        <AppTask $open aria-label="Microsoft Edge">
          <AppIcon $size={24} viewBox="0 0 48 48"><EdgeArt /></AppIcon>
        </AppTask>
        <AppTask aria-label="文件资源管理器">
          <svg width="24" height="20">
            <path fill="#e8a010" d="M1 1h8l2 3H1z" />
            <path fill="#ffd568" d="M1 3h22v16H1z" />
            <path fill="#3f9ee8" d="M5 11h14v8h-4v-3H9v3H5z" />
          </svg>
        </AppTask>
        <AppTask aria-label="Android Studio">
          <svg width="22" height="24">
            <circle cx="11" cy="11" r="10" fill="#7aa84c" />
            <circle cx="11" cy="7.500" r="2.800" fill="#4c5a4a" />
            <path fill="none" stroke="#f0f2f0" strokeWidth="2" d="M11 9 4 22M11 9l7 13M6 16q5 3 10 0" />
            <path stroke="#4c5a4a" strokeWidth="2" d="M11 2v3" />
          </svg>
        </AppTask>
        <AppTask $open aria-label="极域课堂管理系统软件">
          <AppIcon $size={24} viewBox="0 0 48 48"><FlowerArt /></AppIcon>
        </AppTask>
      </AppTasks>
    </TaskGroup>
    <TaskGroup>
      <TaskButton $w={24} aria-label="显示隐藏的图标">
        <LineIcon size={12} w={1.2}><path d="m1 8.500 5-5 5 5" /></LineIcon>
      </TaskButton>
      <TaskButton $w={24} aria-label="网络">
        <LineIcon size={16} w={1.1}>
          <path d="M6 3.500h9.500v8H4V8M9.500 11.500v3M6 14.500h7M.6 2h4v3.500h-4zM2.600 5.500V8H4" />
        </LineIcon>
      </TaskButton>
      <TaskButton $w={24} aria-label="音量">
        <LineIcon size={17} w={1.1}>
          <path d="M1 6.500h2.500L7 3v11l-3.500-3.500H1zM9 6.500q1.200 2 0 4M11.300 4.500q2.400 4 0 8M13.500 2.500q4 6 0 12" />
        </LineIcon>
      </TaskButton>
      <TaskButton $w={24} $font={13}>中</TaskButton>
      <TaskButton $w={30} aria-label="搜狗输入法">
        <AppIcon $size={16} viewBox="0 0 48 48"><SogouArt /></AppIcon>
      </TaskButton>
      <Clock>
        <span>14:03</span>
        <span>2022/10/25</span>
      </Clock>
      <TaskButton $w={32} aria-label="通知">
        <LineIcon size={18} w={1.2}><path d="M1.500 2.500h15v11H11l-2 2.500-2-2.500H1.500z" /></LineIcon>
      </TaskButton>
      <TaskButton as="span" $w={12} />
      <ShowDesktop aria-label="显示桌面" />
    </TaskGroup>
  </Taskbar>
);

export default function App() {
  return (
    <>
      <GlobalStyle />
      <PaintDefs />
      <Screen>
        <Desktop>
          <Rays viewBox="0 0 1920 1040" preserveAspectRatio="none" aria-hidden="true">
            <path fill="#0aa4ff" opacity=".12" d="M200 0 830 178 741 1040H0V0Z" />
            <path stroke="#20b4ff" strokeWidth="2" opacity=".4" d="M220 5 830 179" />
            <path stroke="#30c8ff" strokeWidth="2" opacity=".2" d="M200 816 760 749" />
            <path fill="#00a8f0" opacity=".2" d="M0 842 760 749v291H0Z" />
          </Rays>
          <IconGrid>
            {shortcuts.map(([id, label, linked = true], i) => (
              <Shortcut key={id} $focused={i === 0}>
                <AppIcon $size={48} viewBox="0 0 48 48" aria-hidden="true">
                  {art[id]}
                  {linked && <ArrowBadge />}
                </AppIcon>
                <Label>{label}</Label>
              </Shortcut>
            ))}
          </IconGrid>
          <DockedPanel><DockedTab /></DockedPanel>
          <BrowserWindow />
          <Ime />
        </Desktop>
        <TaskbarView />
      </Screen>
    </>
  );
}
